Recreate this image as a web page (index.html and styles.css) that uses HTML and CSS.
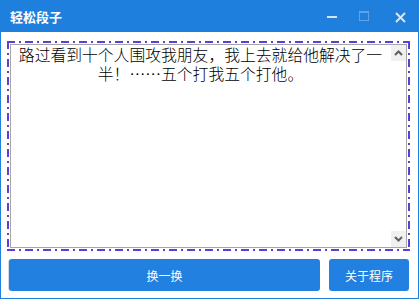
FILE: index.html
```html
<!DOCTYPE html>
<html lang="zh-CN">
<head>
  <meta charset="UTF-8">
  <title>轻松段子</title>
  <link rel="stylesheet" href="styles.css">
</head>
<body>

  <div class="window">
    <header class="titlebar">
      <span class="title">轻松段子</span>
      <div class="controls">
        <span class="ctl min">
          <svg width="10" height="2" viewBox="0 0 10 2"><rect width="10" height="2" fill="#d4e5f7"/></svg>
        </span>
        <span class="ctl max">
          <svg width="10" height="10" viewBox="0 0 10 10">
            <rect x="0.5" y="0.5" width="9" height="9" fill="none" stroke="#5fa2e8"/>
            <rect x="0" y="0" width="10" height="2" fill="#5fa2e8"/>
          </svg>
        </span>
        <span class="ctl close">
          <svg width="11" height="11" viewBox="0 0 11 11">
            <path d="M1 1 L10 10 M10 1 L1 10" stroke="#d4e5f7" stroke-width="2"/>
          </svg>
        </span>
      </div>
    </header>

    <main>
      <div class="focus">
        <div class="editor">
          <p class="joke">路过看到十个人围攻我朋友，我上去就给他解决了一半！……五个打我五个打他。</p>
          <div class="scrollbar">
            <span class="arrow">
              <svg width="9" height="6" viewBox="0 0 9 6"><path d="M1 5 L4.5 1.5 L8 5" fill="none" stroke="#606060" stroke-width="2"/></svg>
            </span>
            <span class="arrow">
              <svg width="9" height="6" viewBox="0 0 9 6"><path d="M1 1 L4.5 4.5 L8 1" fill="none" stroke="#606060" stroke-width="2"/></svg>
            </span>
          </div>
        </div>
      </div>

      <div class="actions">
        <button class="btn next">换一换</button>
        <button class="btn about">关于程序</button>
      </div>
    </main>
  </div>

</body>
</html>
```

FILE: styles.css
```css
* {
  box-sizing: border-box;
}
body {
  margin: 0;
  font-family: "Noto Sans CJK SC", "Liberation Sans", sans-serif;
  background: #fff;
}
.window {
  width: 419px;
  height: 299px;
  border: 1px solid #1e80dc;
  display: flex;
  flex-direction: column;
  background: #fff;
}
.titlebar {
  height: 31px;
  background: #1e80dc;
  display: flex;
  align-items: center;
  padding-left: 9px;
}
.title {
  color: #fff;
  font-size: 13px;
  font-weight: 700;
  line-height: 1;
}
.controls {
  margin-left: auto;
  display: flex;
  height: 100%;
}
.ctl {
  display: flex;
  align-items: center;
  justify-content: center;
  height: 100%;
  svg {
    display: block;
  }
  &.min {
    width: 28px;
  }
  &.max {
    width: 36px;
    padding-bottom: 2px;
  }
  &.close {
    width: 36px;
    padding-top: 1px;
  }
}

main {
  flex: 1;
  display: flex;
  flex-direction: column;
  padding: 9px 8px 7px 6px;
}

/* dash-dot focus frame round the text box */
.focus {
  height: 210px;
  padding: 3px;
  background:
    repeating-linear-gradient(90deg, #5b3fd6 0 8px, transparent 8px 12px, #5b3fd6 12px 14px, transparent 14px 18px) top left / 100% 2px no-repeat,
    repeating-linear-gradient(90deg, #5b3fd6 0 8px, transparent 8px 12px, #5b3fd6 12px 14px, transparent 14px 18px) bottom left / 100% 2px no-repeat,
    repeating-linear-gradient(180deg, #5b3fd6 0 8px, transparent 8px 12px, #5b3fd6 12px 14px, transparent 14px 18px) top left / 2px 100% no-repeat,
    repeating-linear-gradient(180deg, #5b3fd6 0 8px, transparent 8px 12px, #5b3fd6 12px 14px, transparent 14px 18px) top right / 2px 100% no-repeat;
}
.editor {
  height: 100%;
  border: 1px solid #a5a5a5;
  display: flex;
}
.joke {
  flex: 1;
  margin: 0;
  padding: 0 1px;
  font-size: 15.8px;
  font-weight: 300;
  line-height: 19px;
  color: #000;
  text-align: center;
}
.scrollbar {
  width: 16px;
  display: flex;
  flex-direction: column;
  justify-content: space-between;
  padding-left: 1px;
}
.arrow {
  height: 16px;
  background: #f0f0f0;
  display: flex;
  align-items: center;
  justify-content: center;
}

.actions {
  display: flex;
  gap: 9px;
  margin: 8px 1px 0 2px;
}
.btn {
  height: 32px;
  border: 0;
  border-radius: 3px;
  background: #2281e0;
  color: #fff;
  font-family: inherit;
  font-size: 12px;
  cursor: pointer;
  &.next {
    flex: 1;
    box-shadow: -1px 0 0 #d5dbe2;
  }
  &.about {
    width: 80px;
  }
}
```
